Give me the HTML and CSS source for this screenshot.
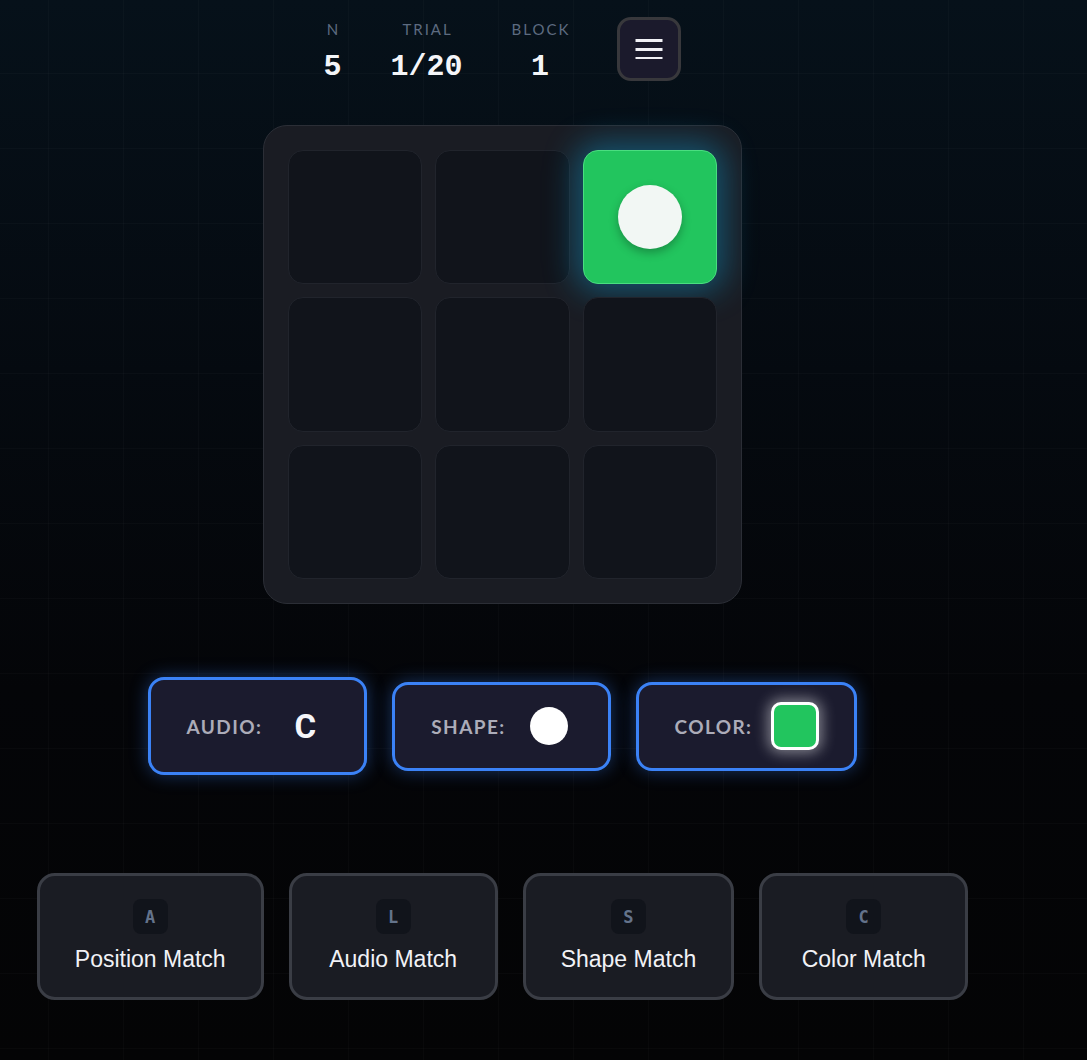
FILE: index.html
```html
<!DOCTYPE html>
<html lang="en">
<head>
<meta charset="utf-8">
<title>Dual N-Back</title>
<link rel="stylesheet" href="styles.css">
</head>
<body>
<div class="app">
  <header class="topbar">
    <div class="stat stat-n">
      <div class="stat-label">N</div>
      <div class="stat-value">5</div>
    </div>
    <div class="stat">
      <div class="stat-label">TRIAL</div>
      <div class="stat-value">1/20</div>
    </div>
    <div class="stat">
      <div class="stat-label">BLOCK</div>
      <div class="stat-value">1</div>
    </div>
    <button class="menu-btn" aria-label="Menu">
      <svg width="28" height="22" viewBox="0 0 28 22">
        <rect x="0.5" y="2" width="27" height="3" fill="#f1f1f6"/>
        <rect x="0.5" y="11" width="27" height="3" fill="#f1f1f6"/>
        <rect x="0.5" y="20" width="27" height="3" fill="#f1f1f6"/>
      </svg>
    </button>
  </header>

  <section class="board">
    <div class="cell"></div>
    <div class="cell"></div>
    <div class="cell active"><div class="dot"></div></div>
    <div class="cell"></div>
    <div class="cell"></div>
    <div class="cell"></div>
    <div class="cell"></div>
    <div class="cell"></div>
    <div class="cell"></div>
  </section>

  <section class="stimuli">
    <div class="stim stim-audio">
      <span class="stim-label">AUDIO:</span>
      <span class="stim-value"><span class="letter">C</span></span>
    </div>
    <div class="stim">
      <span class="stim-label">SHAPE:</span>
      <span class="stim-value"><span class="shape-circle"></span></span>
    </div>
    <div class="stim">
      <span class="stim-label">COLOR:</span>
      <span class="stim-value"><span class="swatch"></span></span>
    </div>
  </section>

  <section class="controls">
    <button class="match-btn"><span class="key">A</span><span class="match-text">Position Match</span></button>
    <button class="match-btn"><span class="key">L</span><span class="match-text">Audio Match</span></button>
    <button class="match-btn"><span class="key">S</span><span class="match-text">Shape Match</span></button>
    <button class="match-btn"><span class="key">C</span><span class="match-text">Color Match</span></button>
  </section>
</div>
</body>
</html>
```

FILE: styles.css
```css
* { box-sizing: border-box; }

html, body {
  margin: 0;
  padding: 0;
  height: 100%;
}

body {
  min-height: 1060px;
  background-color: #040406;
  background-image:
    linear-gradient(rgba(255,255,255,0.018) 1px, transparent 1px),
    linear-gradient(90deg, rgba(255,255,255,0.018) 1px, transparent 1px),
    linear-gradient(180deg, #06111a 0%, #050a10 35%, #040508 65%, #040405 100%);
  background-size: 75px 75px, 75px 75px, 100% 100%;
  background-position: 0 73px, 48px 0, 0 0;
  font-family: "Lato", "Noto Sans", sans-serif;
  color: #f1f1f6;
  overflow: hidden;
}

.app {
  width: 1005px;
  display: flex;
  flex-direction: column;
  align-items: center;
  padding-top: 17px;
}

/* Header */
.topbar {
  display: flex;
  align-items: flex-start;
  gap: 49px;
  height: 64px;
}

.stat {
  display: flex;
  flex-direction: column;
  align-items: center;
}

.stat-label {
  margin-top: 2px;
  font-family: "Lato", sans-serif;
  font-size: 15px;
  line-height: 20px;
  letter-spacing: 2px;
  margin-right: -2px;
  color: #5d6b80;
}

.stat-value {
  margin-top: 10px;
  font-family: "Liberation Mono", "Courier New", monospace;
  font-weight: 700;
  font-size: 30px;
  line-height: 36px;
  color: #f4f5f8;
}

.menu-btn {
  width: 64px;
  height: 64px;
  border-radius: 14px;
  border: 3px solid #38383c;
  background: #1b1a2c;
  display: flex;
  align-items: center;
  justify-content: center;
  padding: 0 0 2px;
}

/* Board */
.board {
  margin-top: 44px;
  width: 479px;
  height: 479px;
  padding: 24px;
  border-radius: 24px;
  background: #1a1c23;
  border: 1px solid #2b2e36;
  display: grid;
  grid-template-columns: repeat(3, 1fr);
  grid-template-rows: repeat(3, 1fr);
  gap: 13px;
}

.cell {
  border-radius: 15px;
  background: #11141b;
  border: 1px solid #21242c;
  display: flex;
  align-items: center;
  justify-content: center;
}

.cell.active {
  background: #22c55e;
  border-color: #4ade80;
  box-shadow: 0 0 32px 7px rgba(14, 150, 200, 0.48);
}

.dot {
  width: 64px;
  height: 64px;
  border-radius: 50%;
  background: #f2f7f4;
  box-shadow: 0 4px 10px rgba(0, 0, 0, 0.28);
}

/* Stimuli */
.stimuli {
  margin-top: 73px;
  display: flex;
  align-items: center;
  gap: 25px;
}

.stim {
  height: 89px;
  display: flex;
  align-items: center;
  gap: 19px;
  padding: 0 35px 0 36px;
  border: 3px solid #3b82f6;
  border-radius: 16px;
  background: #1b1b2e;
  box-shadow: 0 0 18px rgba(59, 130, 246, 0.38);
}

.stim-audio {
  height: 98px;
}

.stim-label {
  font-family: "Lato", sans-serif;
  font-weight: 700;
  font-size: 19px;
  letter-spacing: 1.4px;
  color: #acacb9;
}

.stim-value {
  width: 48px;
  display: flex;
  align-items: center;
  justify-content: center;
}

.letter {
  font-family: "Roboto", "Liberation Sans", sans-serif;
  font-weight: 700;
  font-size: 33px;
  line-height: 1;
  color: #f6f6fa;
}

.shape-circle {
  width: 38px;
  height: 38px;
  border-radius: 50%;
  background: #ffffff;
}

.swatch {
  width: 48px;
  height: 48px;
  border-radius: 10px;
  background: #22c55e;
  border: 3px solid #ffffff;
  box-shadow: 0 0 14px 3px rgba(255, 255, 255, 0.45);
}

/* Controls */
.controls {
  margin-top: 98px;
  display: flex;
  gap: 25px;
}

.match-btn {
  min-width: 209px;
  height: 127px;
  padding: 23px 35px 0;
  border: 3px solid #3a3d45;
  border-radius: 18px;
  background: #1a1c23;
  display: flex;
  flex-direction: column;
  align-items: center;
  gap: 10px;
  cursor: pointer;
}

.key {
  width: 35px;
  height: 35px;
  border-radius: 8px;
  background: #11141b;
  display: flex;
  align-items: center;
  justify-content: center;
  font-family: "DejaVu Sans Mono", "Liberation Mono", monospace;
  font-weight: 700;
  font-size: 17px;
  color: #64738b;
}

.match-text {
  font-family: "Liberation Sans", Arial, sans-serif;
  font-size: 23px;
  line-height: 30px;
  color: #f1f2f6;
  white-space: nowrap;
}
```
